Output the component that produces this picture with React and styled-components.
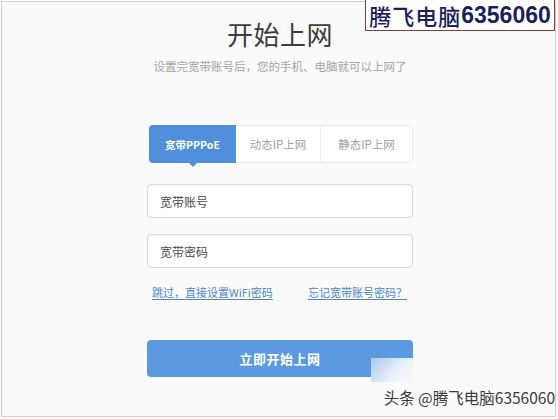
import React from "react";
import styled, { createGlobalStyle } from "styled-components";

const Global = createGlobalStyle`
  html, body { margin: 0; padding: 0; background: #ffffff; }
  body { font-family: "Noto Sans CJK SC", "Liberation Sans", sans-serif; }
`;

const Page = styled.div`
  position: relative;
  width: 558px;
  height: 419px;
  overflow: hidden;
  background: #ffffff;
`;

const Frame = styled.div`
  box-sizing: border-box;
  margin: 1px 2px 2px 1px;
  width: 555px;
  height: 416px;
  border: 1px solid #cfcfcf;
  background: #fafafa;
  display: flex;
  flex-direction: column;
  align-items: center;
  padding-left: 3px;
`;

const Title = styled.h1`
  margin: 17px 0 0;
  font-size: 26px;
  line-height: 30px;
  font-weight: 400;
  color: #3c3c3c;
  letter-spacing: 0.5px;
`;

const Subtitle = styled.p`
  margin: 9px 0 0;
  font-size: 11.5px;
  line-height: 16px;
  color: #a3a3a3;
`;

const Column = styled.div`
  width: 266px;
  display: flex;
  flex-direction: column;
`;

const Tabs = styled.div`
  margin: 51px 0 0 2px;
  height: 38px;
  display: flex;
  box-sizing: border-box;
  border: 1px solid #ececec;
  border-radius: 4px;
  background: #ffffff;
`;

const Tab = styled.div`
  position: relative;
  flex: ${(p) => p.$grow};
  display: flex;
  align-items: center;
  justify-content: center;
  font-size: ${(p) => (p.$active ? "10.5px" : "11.5px")};
  font-weight: ${(p) => (p.$active ? 700 : 400)};
  color: ${(p) => (p.$active ? "#ffffff" : "#a0a0a0")};
  background: ${(p) => (p.$active ? "#4f8fdc" : "transparent")};
  border-radius: ${(p) => (p.$active ? "4px 0 0 4px" : "0")};
  margin: ${(p) => (p.$active ? "-1px 0 -1px -1px" : "0")};
  border-left: ${(p) => (p.$divider ? "1px solid #eeeeee" : "none")};
  &::after {
    content: "";
    display: ${(p) => (p.$active ? "block" : "none")};
    position: absolute;
    left: 50%;
    bottom: -4px;
    margin-left: -4px;
    border-left: 4px solid transparent;
    border-right: 4px solid transparent;
    border-top: 4px solid #4f8fdc;
  }
`;

const Field = styled.div`
  box-sizing: border-box;
  height: ${(p) => p.$h}px;
  margin-top: ${(p) => p.$mt}px;
  border: 1px solid #d9d9d9;
  border-radius: 4px;
  background: #ffffff;
  display: flex;
  align-items: center;
  padding-left: 12px;
  font-size: 12px;
  color: #4a4a4a;
  box-shadow: inset 0 1px 1px rgba(0, 0, 0, 0.03);
`;

const Links = styled.div`
  margin-top: 17px;
  display: flex;
  justify-content: space-between;
  padding: 0 6px 0 5px;
`;

const LinkText = styled.a`
  font-size: 11px;
  line-height: 14px;
  color: #4a88c8;
  text-decoration: underline;
  text-underline-offset: 2px;
`;

const Button = styled.div`
  margin-top: 41px;
  height: 37px;
  border-radius: 4px;
  background: #5b9ae0;
  color: #ffffff;
  font-size: 13px;
  font-weight: 600;
  display: flex;
  align-items: center;
  justify-content: center;
  letter-spacing: 0.5px;
`;

const Stamp = styled.div`
  position: absolute;
  left: 365px;
  top: 0;
  width: 190px;
  height: 31px;
  box-sizing: border-box;
  border: 1.5px solid #8e3a3a;
  border-top: none;
  background: #ffffff;
  display: flex;
  align-items: center;
  justify-content: center;
  color: #1b1f5e;
  font-size: 22px;
  font-weight: 700;
  white-space: nowrap;
`;

const StampCJK = styled.span`
  font-family: "Noto Sans CJK SC", serif;
  font-weight: 500;
  letter-spacing: 1px;
`;

const StampNum = styled.span`
  font-family: "Liberation Sans", sans-serif;
  font-weight: 700;
  font-size: 23px;
`;

const Glare = styled.div`
  position: absolute;
  left: 371px;
  top: 358px;
  width: 42px;
  height: 24px;
  background: linear-gradient(135deg, #a9c8f0 0%, #e9f1fb 60%, #f8f9fb 100%);
`;

const Credit = styled.div`
  position: absolute;
  right: 3px;
  top: 387px;
  font-size: 15.5px;
  line-height: 20px;
  color: #3a3a3a;
  white-space: nowrap;
`;

export default function App() {
  return (
    <>
      <Global />
      <Page>
        <Frame>
          <Title>开始上网</Title>
          <Subtitle>设置完宽带账号后，您的手机、电脑就可以上网了</Subtitle>
          <Column>
            <Tabs>
              <Tab $grow={89} $active>宽带PPPoE</Tab>
              <Tab $grow={86}>动态IP上网</Tab>
              <Tab $grow={93} $divider>静态IP上网</Tab>
            </Tabs>
            <Field $h={34} $mt={21}>宽带账号</Field>
            <Field $h={34} $mt={16}>宽带密码</Field>
            <Links>
              <LinkText>跳过，直接设置WiFi密码</LinkText>
              <LinkText>忘记宽带账号密码？</LinkText>
            </Links>
            <Button>立即开始上网</Button>
          </Column>
        </Frame>
        <Glare />
        <Stamp>
          <StampCJK>腾飞电脑</StampCJK>
          <StampNum>6356060</StampNum>
        </Stamp>
        <Credit>头条 @腾飞电脑6356060</Credit>
      </Page>
    </>
  );
}
